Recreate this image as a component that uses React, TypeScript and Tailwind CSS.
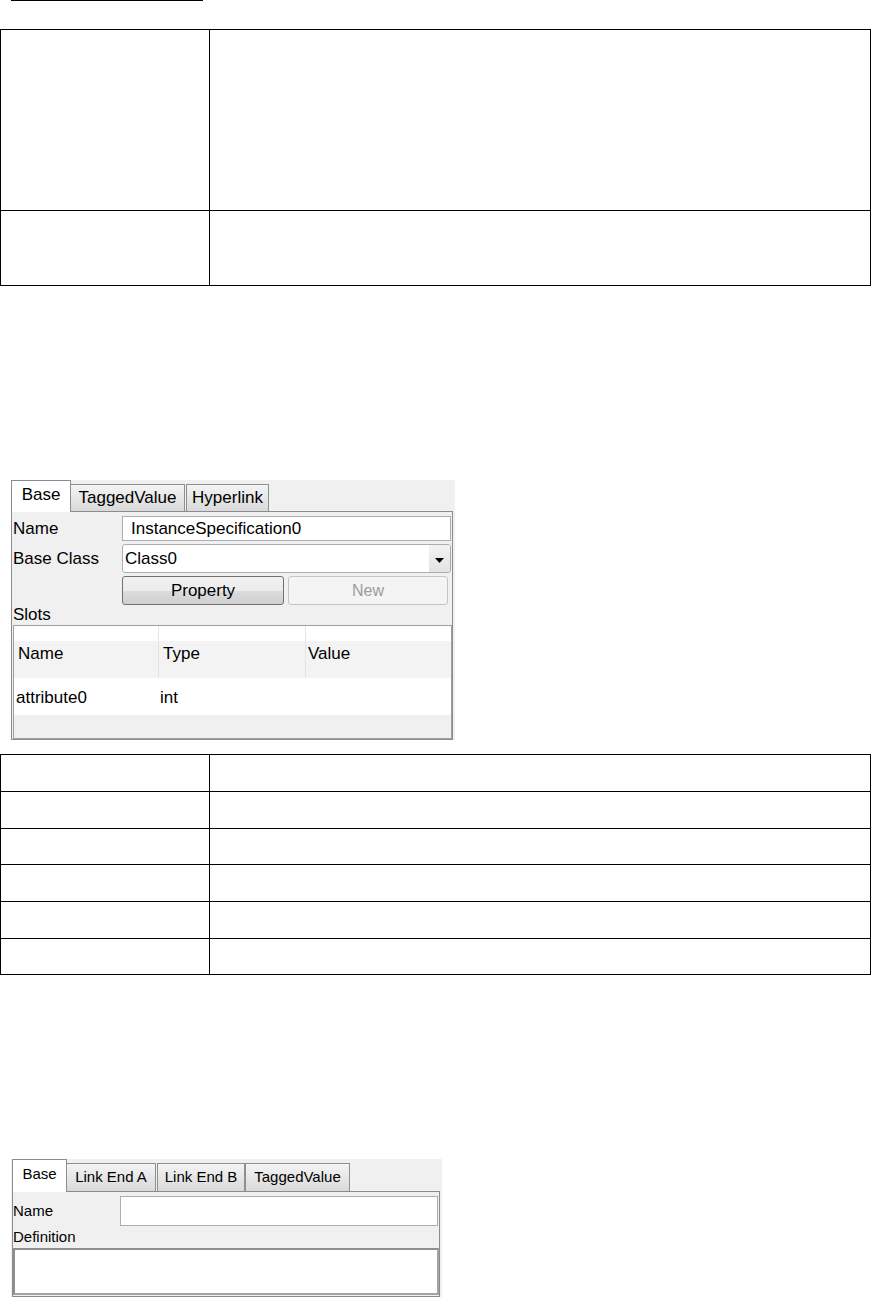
function Tab({ label, className, active }: { label: string; className: string; active?: boolean }) {
  if (active) {
    return (
      <div
        className={`relative z-10 -mb-px flex items-center justify-center border border-b-0 border-[#898c95] bg-white ${className}`}
      >
        {label}
      </div>
    );
  }
  return (
    <div
      className={`flex items-center justify-center border border-b-0 border-[#8e8f8f] bg-linear-to-b from-[#f4f4f4] to-[#d9d9d9] ${className}`}
    >
      {label}
    </div>
  );
}

function DocTable({ rows }: { rows: string[] }) {
  return (
    <div className="w-[871px] border border-black">
      {rows.map((h, i) => (
        <div key={i} className={`flex ${h} ${i < rows.length - 1 ? "border-b border-black" : ""}`}>
          <div className="w-[209px] border-r border-black" />
          <div className="flex-1" />
        </div>
      ))}
    </div>
  );
}

function InstanceDialog() {
  return (
    <div className="ml-[11px] w-[444px] bg-[#f0f0f0] text-[17px] text-black">
      {/* tabs */}
      <div className="flex h-[31px] items-end">
        <Tab active label="Base" className="h-[32px] w-[60px] pb-[3px]" />
        <Tab label="TaggedValue" className="-ml-px h-[27px] w-[115px]" />
        <Tab label="Hyperlink" className="ml-px h-[27px] w-[83px]" />
      </div>

      <div className="flex h-[229px] w-[442px] flex-col border border-[#898c95]">
        <div className="mt-[4px] flex h-[25px]">
          <div className="flex w-[110px] items-center pl-px">Name</div>
          <div className="flex w-[329px] items-center border border-[#abadb3] bg-white pl-[8px]">
            InstanceSpecification0
          </div>
        </div>

        <div className="mt-[3px] flex h-[29px]">
          <div className="flex w-[110px] items-center pl-px">Base Class</div>
          <div className="flex w-[329px] rounded-[3px] border border-[#acacac] bg-white">
            <div className="flex flex-1 items-center pl-[2px]">Class0</div>
            <div className="flex w-[21px] items-center justify-center rounded-r-[2px] bg-linear-to-b from-[#f3f3f3] to-[#e3e3e3] pt-[3px]">
              <svg width="9" height="5" viewBox="0 0 9 5">
                <path d="M0 0H9L4.5 5Z" fill="#000" />
              </svg>
            </div>
          </div>
        </div>

        <div className="mt-[3px] flex h-[29px]">
          <div className="w-[110px]" />
          <div className="flex w-[162px] items-center justify-center rounded-[3px] border border-[#707070] bg-[linear-gradient(to_bottom,#f2f2f2_0%,#ebebeb_50%,#dddddd_51%,#cfcfcf_100%)]">
            Property
          </div>
          <div className="ml-[4px] flex w-[160px] items-center justify-center rounded-[3px] border border-[#c3c6c9] bg-[#f4f4f4] text-[16px] text-[#9c9c9c]">
            New
          </div>
        </div>

        <div className="flex h-[20px] items-center pl-px">Slots</div>

        {/* slots list */}
        <div className="ml-px flex w-[439px] flex-1 flex-col border border-[#9ca0a6]">
          <div className="flex h-[52px] bg-[linear-gradient(to_bottom,#ffffff_15px,#f3f3f4_15px)]">
            <div className="flex w-[145px] items-center border-r border-[#e3e4e6] pl-[4px] pt-[3px]">Name</div>
            <div className="flex w-[147px] items-center border-r border-[#e3e4e6] pl-[4px] pt-[3px]">Type</div>
            <div className="flex flex-1 items-center pl-[2px] pt-[3px]">Value</div>
          </div>
          <div className="flex h-[37px] items-center bg-white pt-[2px]">
            <div className="w-[146px] pl-[2px]">attribute0</div>
            <div>int</div>
          </div>
          <div className="flex-1 bg-[#f0f0f0]" />
        </div>
      </div>
    </div>
  );
}

function LinkDialog() {
  return (
    <div className="ml-[11px] w-[431px] bg-[#f0f0f0] pb-[2px] text-[15px] text-black">
      <div className="flex h-[32px] items-end pl-px">
        <Tab active label="Base" className="h-[33px] w-[55px] pb-[3px]" />
        <Tab label="Link End A" className="-ml-px h-[28px] w-[90px]" />
        <Tab label="Link End B" className="ml-px h-[28px] w-[88px]" />
        <Tab label="TaggedValue" className="h-[28px] w-[105px]" />
      </div>

      <div className="ml-px flex h-[106px] w-[428px] flex-col border border-[#898c95]">
        <div className="mt-[4px] flex h-[30px]">
          <div className="flex w-[107px] items-center">Name</div>
          <div className="w-[318px] border border-[#abadb3] bg-white" />
        </div>
        <div className="flex h-[22px] items-center">Definition</div>
        <div className="h-[47px] w-[426px] border-2 border-[#a3a3a3] border-t-[#8e8e8e] border-l-[#8e8e8e] bg-white" />
      </div>
    </div>
  );
}

export default function App() {
  return (
    <div className="w-[871px] bg-white font-['Liberation_Sans',Arial,sans-serif]">
      <div className="ml-[11px] h-px w-[192px] bg-black" />

      <div className="mt-[28px]">
        <DocTable rows={["h-[181px]", "h-[74px]"]} />
      </div>

      <div className="mt-[194px]">
        <InstanceDialog />
      </div>

      <div className="mt-[14px]">
        <DocTable rows={["h-[37px]", "h-[37px]", "h-[36px]", "h-[37px]", "h-[37px]", "h-[35px]"]} />
      </div>

      <div className="mt-[184px]">
        <LinkDialog />
      </div>
    </div>
  );
}
